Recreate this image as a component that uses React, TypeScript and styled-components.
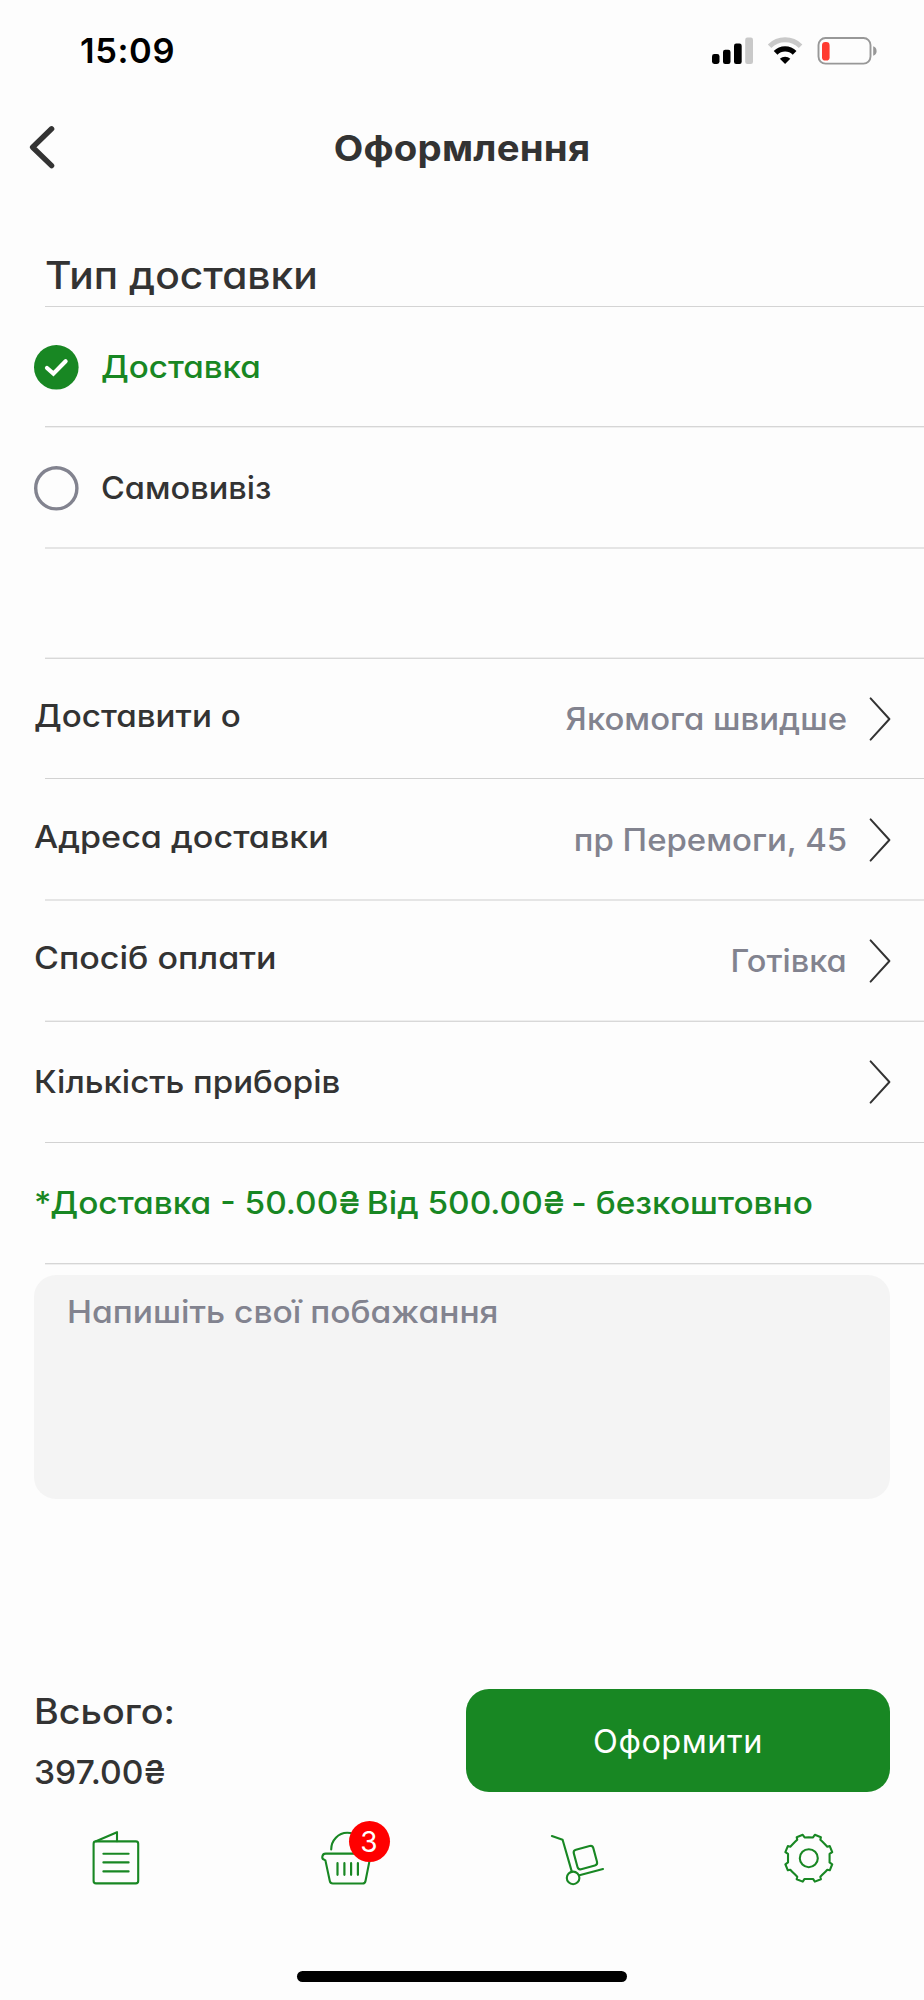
import React from 'react';
import styled, { createGlobalStyle } from 'styled-components';

const GREEN = '#188723';
const INK = '#333333';
const MUTED = '#82838f';

const GlobalStyle = createGlobalStyle`
  * { box-sizing: border-box; }
  body {
    margin: 0;
    background: #fdfdfd;
    color: ${INK};
    font-family: Inter, 'Liberation Sans', sans-serif;
  }
`;

const Screen = styled.main`
  display: flex;
  flex-direction: column;
  width: 924px;
  height: 2000px;
  overflow: hidden;
  background: #fdfdfd;
`;

const StatusBar = styled.div`
  display: flex;
  align-items: center;
  justify-content: space-between;
  height: 101px;
  padding: 0 44px 0 80px;
  flex: none;
`;

const Clock = styled.span`
  font-size: 34.5px;
  font-weight: 600;
  letter-spacing: 0.6px;
  color: #000;
`;

const Header = styled.header`
  display: grid;
  grid-template-columns: 84px 1fr 84px;
  align-items: center;
  height: 94px;
  flex: none;
`;

const BackButton = styled.button`
  width: 84px;
  height: 94px;
  padding: 0;
  border: 0;
  background: none;
`;

const Title = styled.h1`
  margin: 0;
  text-align: center;
  font-size: 35.5px;
  font-weight: 700;
  letter-spacing: 0.2px;
  font-feature-settings: 'cv11';
  transform: scaleX(1.08);
`;

const SectionTitle = styled.h2`
  display: flex;
  align-items: center;
  height: 111px;
  margin: 0;
  padding: 48px 0 0 45px;
  flex: none;
  font-size: 38px;
  font-weight: 500;
  font-feature-settings: 'cv11';

  span {
    transform: scaleX(1.073);
    transform-origin: left;
  }
`;

const Divider = styled.div<{ $top: string; $bottom?: string }>`
  height: 2px;
  margin-left: 45px;
  flex: none;
  border-top: 1px solid ${p => p.$top};
  border-bottom: 1px solid ${p => p.$bottom ?? 'transparent'};
`;

const Row = styled.div<{ $height: number }>`
  display: flex;
  align-items: center;
  justify-content: space-between;
  height: ${p => p.$height}px;
  padding: 0 31px 0 33.5px;
  flex: none;
`;

const Option = styled(Row)<{ $drop?: number }>`
  justify-content: flex-start;
  gap: 22px;
  padding-top: ${p => p.$drop ?? 0}px;
`;

const Gap = styled.div`
  height: 108px;
  flex: none;
`;

const Label = styled.span<{ $stretch: number; $color?: string; $lift?: number; $end?: boolean }>`
  display: inline-block;
  padding-bottom: ${p => p.$lift ?? 0}px;
  font-size: 31px;
  font-weight: 500;
  line-height: 40px;
  color: ${p => p.$color ?? INK};
  white-space: nowrap;
  font-feature-settings: 'cv11';
  transform: scaleX(${p => p.$stretch});
  transform-origin: ${p => (p.$end ? 'right' : 'left')};
`;

const Currency = styled.span`
  letter-spacing: -2.5px;
`;

const Value = styled.span`
  display: flex;
  align-items: center;
  gap: 22px;
`;

const Notes = styled.div`
  height: 224px;
  margin: 10px 34px 0;
  padding: 17px 33px;
  border-radius: 22px;
  background: #f4f4f4;
  flex: none;
`;

const Checkout = styled.section`
  display: flex;
  justify-content: space-between;
  height: 103px;
  margin: 190px 34px 0;
  flex: none;
`;

const Totals = styled.div`
  display: flex;
  flex-direction: column;
  justify-content: space-between;
  height: 105px;
  padding-top: 1px;
`;

const TotalText = styled.span<{ $size: number; $stretch: number }>`
  font-size: ${p => p.$size}px;
  font-weight: 500;
  line-height: 43px;
  transform: scaleX(${p => p.$stretch});
  transform-origin: left;
`;

const SubmitButton = styled.button`
  width: 424px;
  height: 103px;
  padding: 2px 0 0;
  border: 0;
  border-radius: 23px;
  background: ${GREEN};
  color: #fff;
  font-family: inherit;
  font-size: 32.5px;
  letter-spacing: 0.5px;
`;

const TabBar = styled.nav`
  display: grid;
  grid-template-columns: repeat(4, 1fr);
  justify-items: center;
  margin-top: 36px;
  height: 143px;
  flex: none;
`;

const Tab = styled.div`
  position: relative;
  width: 60px;
  height: 60px;
`;

const Badge = styled.span`
  position: absolute;
  left: 32px;
  top: -7px;
  display: flex;
  align-items: center;
  justify-content: center;
  width: 41px;
  height: 41px;
  border-radius: 50%;
  background: #ff0000;
  color: #fff;
  font-size: 28px;
`;

const HomeIndicator = styled.div`
  width: 330px;
  height: 11px;
  margin: 0 auto;
  border-radius: 6px;
  background: #000;
  flex: none;
`;

const TabSvg = styled.svg`
  display: block;
  fill: none;
  stroke: ${GREEN};
  stroke-width: 2.1;
  stroke-linecap: round;
  stroke-linejoin: round;
`;

const StatusIcons = () => (
  <svg width="168" height="32" viewBox="0 0 168 32" fill="none">
    <g fill="#000">
      <rect x="0" y="19" width="7.5" height="10" rx="2.4" />
      <rect x="11" y="14.8" width="7.5" height="14.2" rx="2.2" />
      <rect x="22" y="8.6" width="7.7" height="20.4" rx="2.2" />
      <rect x="33.2" y="2.6" width="7.8" height="26.4" rx="2.2" fill="#c9c9c9" />
    </g>
    <path d="M57.6 11.2A22 22 0 0 1 88.6 11.2" stroke="#c9c9c9" strokeWidth="5" />
    <path d="M63.6 17.9A13.2 13.2 0 0 1 82.6 17.9" stroke="#000" strokeWidth="5.2" />
    <path d="M73.1 29L67.9 23.8A7.5 7.5 0 0 1 78.3 23.8Z" fill="#000" />
    <rect x="106.5" y="3" width="52" height="25.6" rx="7" stroke="#989898" strokeWidth="1.9" />
    <rect x="110" y="7" width="7.6" height="18.6" rx="3.4" fill="#ff3b30" />
    <path d="M161.2 11.2Q164.6 12.4 164.6 16T161.2 20.8Z" fill="#989898" />
  </svg>
);

const BackIcon = () => (
  <svg width="84" height="94" viewBox="0 0 84 94" fill="none">
    <path d="M51.6 27.8L32.6 46.2L51.6 64.6" stroke={INK} strokeWidth="5.4" strokeLinecap="round" strokeLinejoin="round" />
  </svg>
);

const Chevron = () => (
  <svg width="24" height="46" viewBox="0 0 24 46" fill="none">
    <path d="M1.6 2.4L20.4 23L1.6 43.6" stroke={INK} strokeWidth="2" strokeLinecap="round" strokeLinejoin="round" />
  </svg>
);

const Radio = ({ checked }: { checked?: boolean }) => (
  <svg width="45" height="45" viewBox="0 0 45 45" fill="none">
    {checked ? (
      <>
        <circle cx="22.3" cy="22.3" r="22.3" fill={GREEN} />
        <path d="M13 23L19.4 28.6L31.6 16.2" stroke="#fff" strokeWidth="4.2" strokeLinecap="round" />
      </>
    ) : (
      <circle cx="22.3" cy="22.3" r="20.6" stroke={MUTED} strokeWidth="3.4" />
    )}
  </svg>
);

const MenuIcon = () => (
  <TabSvg width="60" height="60" viewBox="0 0 60 60">
    <rect x="7.6" y="13.4" width="44.6" height="42" rx="2.4" />
    <path d="M10 13.2L31 4.2V13.2" />
    <path d="M17.4 25.7H42.6M17.4 34.4H42.6M17.4 43.4H42.6" />
  </TabSvg>
);

const BasketIcon = () => (
  <TabSvg width="60" height="60" viewBox="0 0 60 60">
    <path d="M14.2 21.4A16 16.6 0 0 1 46.2 21.4" />
    <path d="M54 25.6H8.6C5 25.6 4.2 30.6 7 31.6L8.4 32.4L12.8 53Q13.3 55.5 15.8 55.5H45.6Q48 55.5 48.5 53L52.6 32.4" />
    <path d="M20.5 35.2V46.8M27.4 35.2V46.8M34.1 35.2V46.8M40.9 35.2V46.8" strokeWidth="2.2" />
  </TabSvg>
);

const TrolleyIcon = () => (
  <TabSvg width="60" height="60" viewBox="0 0 60 60">
    <path d="M3.9 8L14.6 11.7L23.8 43.6" />
    <circle cx="25.1" cy="49.9" r="6.3" />
    <path d="M31.4 47.2L55 41" />
    <rect x="27.3" y="19.5" width="20.2" height="20.2" rx="3" transform="rotate(-15 37.4 29.6)" />
  </TabSvg>
);

const gearPoints = (() => {
  const points: string[] = [];
  const add = (deg: number, r: number) => {
    const a = (deg * Math.PI) / 180;
    points.push(`${(29.8 + r * Math.sin(a)).toFixed(2)},${(30.2 - r * Math.cos(a)).toFixed(2)}`);
  };
  for (let q = 0; q < 360; q += 90) {
    add(q, 20.8);
    add(q + 11.5, 21.2);
    add(q + 14.5, 24.2);
    add(q + 30, 24.2);
    add(q + 32, 21.8);
    add(q + 39, 21.4);
    add(q + 51, 21.4);
    add(q + 58, 21.8);
    add(q + 60, 24.2);
    add(q + 75.5, 24.2);
    add(q + 78.5, 21.2);
  }
  return points.join(' ');
})();

const GearIcon = () => (
  <TabSvg width="60" height="60" viewBox="0 0 60 60">
    <polygon points={gearPoints} />
    <circle cx="29.8" cy="30.2" r="9" />
  </TabSvg>
);

export default function App() {
  return (
    <>
      <GlobalStyle />
      <Screen>
        <StatusBar>
          <Clock>15:09</Clock>
          <StatusIcons />
        </StatusBar>
        <Header>
          <BackButton aria-label="Назад"><BackIcon /></BackButton>
          <Title>Оформлення</Title>
        </Header>

        <SectionTitle><span>Тип доставки</span></SectionTitle>
        <Divider $top="#d4d4d4" />
        <Option $height={118}>
          <Radio checked />
          <Label $stretch={1.07} $color={GREEN} $lift={1}>Доставка</Label>
        </Option>
        <Divider $top="#d6d6d6" $bottom="#efefef" />
        <Option $height={119} $drop={1}>
          <Radio />
          <Label $stretch={1.05} $lift={1}>Самовивіз</Label>
        </Option>
        <Divider $top="#e5e5e5" $bottom="#e5e5e5" />
        <Gap />
        <Divider $top="#eeeeee" $bottom="#d8d8d8" />
        <Row $height={119}>
          <Label $stretch={1.07} $lift={6}>Доставити о</Label>
          <Value><Label $stretch={1.062} $color={MUTED} $end>Якомога швидше</Label><Chevron /></Value>
        </Row>
        <Divider $top="#d2d2d2" />
        <Row $height={119}>
          <Label $stretch={1.1} $lift={6}>Адреса доставки</Label>
          <Value><Label $stretch={1.063} $color={MUTED} $end>пр Перемоги, 45</Label><Chevron /></Value>
        </Row>
        <Divider $top="#e5e5e5" $bottom="#e5e5e5" />
        <Row $height={119}>
          <Label $stretch={1.098} $lift={6}>Спосіб оплати</Label>
          <Value><Label $stretch={1.05} $color={MUTED} $end>Готівка</Label><Chevron /></Value>
        </Row>
        <Divider $top="#eeeeee" $bottom="#d8d8d8" />
        <Row $height={120}>
          <Label $stretch={1.065}>Кількість приборів</Label>
          <Chevron />
        </Row>
        <Divider $top="#d2d2d2" />
        <Row $height={119}>
          <Label $stretch={1.078} $color={GREEN} $lift={1}>
            *Доставка - 50.00<Currency>₴</Currency> Від 500.00<Currency>₴</Currency> - безкоштовно
          </Label>
        </Row>
        <Divider $top="#d6d6d6" $bottom="#efefef" />

        <Notes>
          <Label $stretch={1.083} $color={MUTED}>Напишіть свої побажання</Label>
        </Notes>

        <Checkout>
          <Totals>
            <TotalText $size={35} $stretch={1.077}>Всього:</TotalText>
            <TotalText $size={33} $stretch={1.02}>397.00₴</TotalText>
          </Totals>
          <SubmitButton>Оформити</SubmitButton>
        </Checkout>

        <TabBar>
          <Tab><MenuIcon /></Tab>
          <Tab><BasketIcon /><Badge>3</Badge></Tab>
          <Tab><TrolleyIcon /></Tab>
          <Tab><GearIcon /></Tab>
        </TabBar>
        <HomeIndicator />
      </Screen>
    </>
  );
}
